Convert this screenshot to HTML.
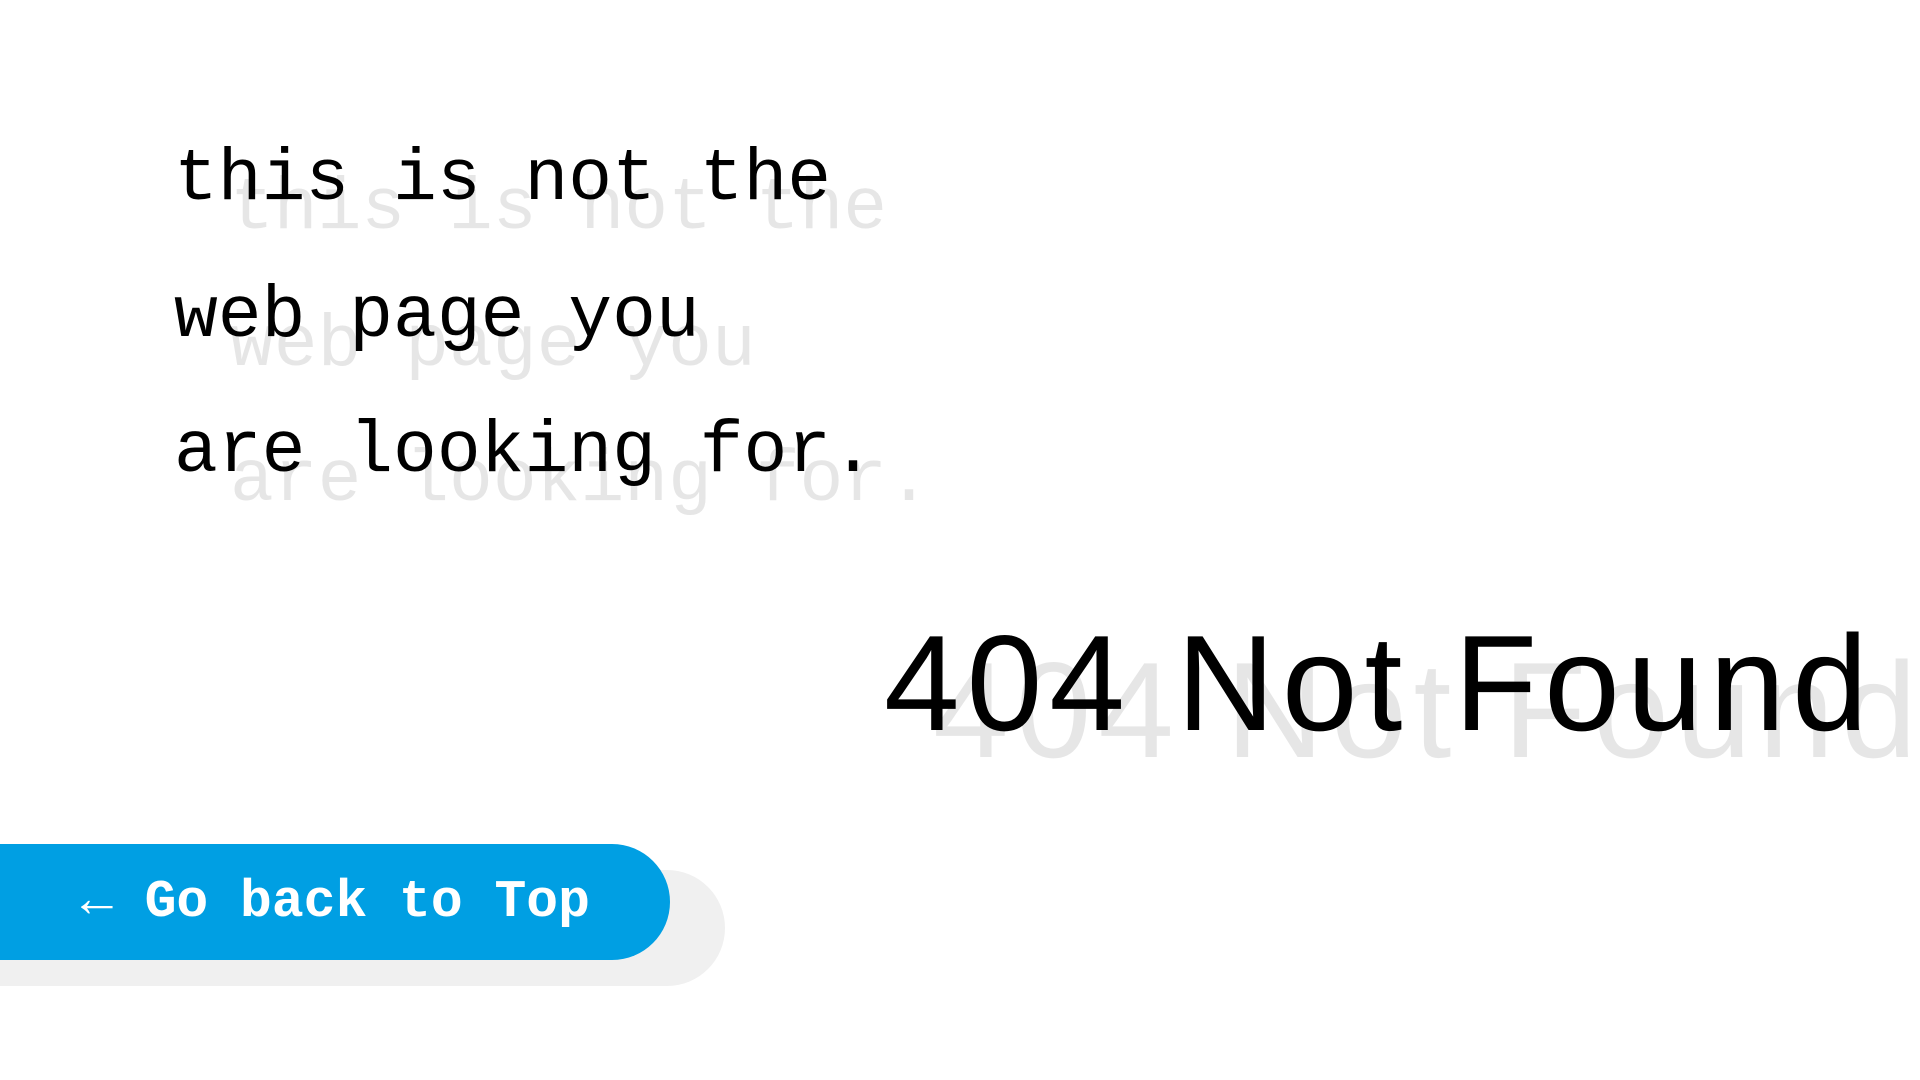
<!DOCTYPE html>
<html><head><meta charset="utf-8"><style>
html,body{margin:0;padding:0;background:#fff;width:1920px;height:1080px;overflow:hidden;position:relative}
.t{position:absolute;white-space:pre;line-height:1}
.mono{font-family:"Liberation Mono",monospace;font-size:73px}
.sans{font-family:"Liberation Sans",sans-serif;font-size:136px;letter-spacing:7px}
.g{color:#e6e6e6}
.k{color:#000}
.btn{position:absolute;left:0;top:844px;width:670px;height:116px;background:#009fe3;border-radius:0 58px 58px 0}
.bsh{position:absolute;left:0;top:870px;width:725px;height:116px;background:#f0f0f0;border-radius:0 58px 58px 0}
.bt{position:absolute;left:81px;top:902px;font-family:"Liberation Mono",monospace;font-weight:bold;font-size:53px;color:#fff;white-space:pre;line-height:0}
</style></head><body>
<div class="t mono g" style="left:230px;top:172px">this is not the</div>
<div class="t mono g" style="left:230px;top:309px">web page you</div>
<div class="t mono g" style="left:230px;top:444px">are looking for.</div>
<div class="t mono k" style="left:174px;top:143px">this is not the</div>
<div class="t mono k" style="left:174px;top:280px">web page you</div>
<div class="t mono k" style="left:174px;top:415px">are looking for.</div>
<div class="t sans g" style="left:933px;top:642px">404 Not Found</div>
<div class="t sans k" style="left:884px;top:615px">404 Not Found</div>
<div class="bsh"></div>
<div class="btn"></div>
<div class="bt">← Go back to Top</div>
</body></html>
